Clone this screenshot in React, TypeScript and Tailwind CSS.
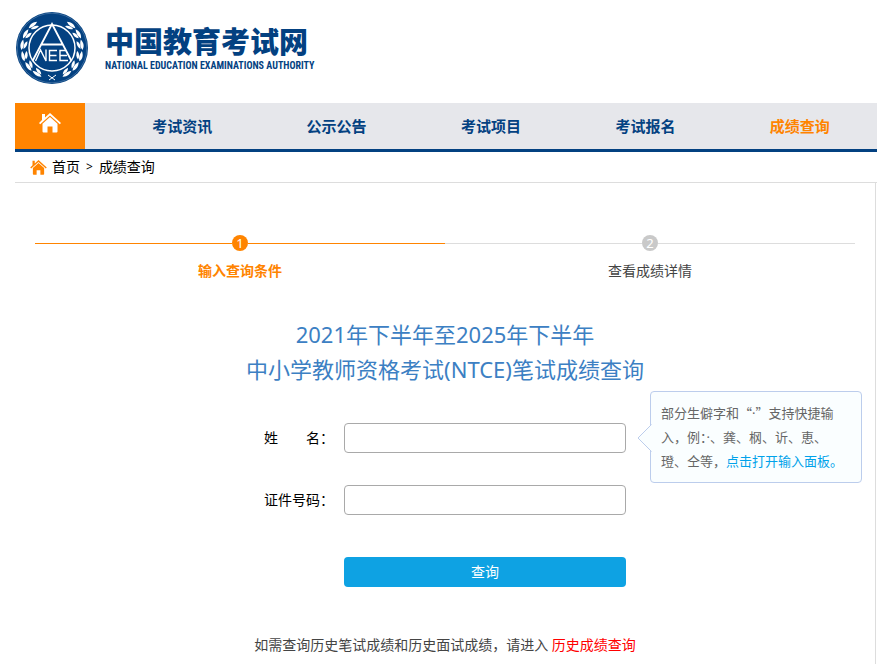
import React, { useState } from 'react';

const NAV_ITEMS = ['考试资讯', '公示公告', '考试项目', '考试报名', '成绩查询'];

const STEPS = ['输入查询条件', '查看成绩详情'];

// angles (from the bottom, in degrees) of the leaf pairs on one branch
const LEAVES = [22, 44, 66, 88, 110, 132];

const Branch: React.FC = () => (
  <g fill="#fff">
    {LEAVES.map((angle) => (
      <g key={angle} transform={`rotate(${angle} 36 36)`}>
        <path d="M37 66.5C34 64 31 63.5 26.5 64.5C29.5 67.5 33 68.5 37 66.5Z" />
        <path d="M36 64.5C34.5 61.5 32 60.3 28.5 60.3C29.5 63 32 64.8 36 64.5Z" />
      </g>
    ))}
  </g>
);

const Emblem: React.FC = () => (
  <svg width="74" height="74" viewBox="-1 -1 74 74" aria-hidden="true">
    <circle cx="36" cy="36" r="36" fill="#034181" />
    <circle cx="36" cy="36" r="34.8" fill="none" stroke="#6f93b8" strokeWidth="0.5" />
    <Branch />
    <g transform="translate(72 0) scale(-1 1)">
      <Branch />
    </g>
    <path d="M33 68L40 63M39 68L32 63" stroke="#fff" strokeWidth="1" />
    <circle cx="36" cy="36" r="23" fill="#034181" stroke="#fff" strokeWidth="1.5" />
    <path d="M16.5 49L36 12L55.5 49M25.5 32.5H46.5" fill="none" stroke="#fff" strokeWidth="1.8" />
    <path
      d="M19.5 49L24.5 38L30 49V37.5M41 38.5H33.5V48.5H41M33.5 43.5H40.5M52 48.5H44V38.5H49.5M44 43.5H51"
      fill="none"
      stroke="#fff"
      strokeWidth="1.4"
    />
  </svg>
);

const HomeIcon: React.FC<{ className: string }> = ({ className }) => (
  <svg className={className} viewBox="0 0 22 20" fill="currentColor" aria-hidden="true">
    <path d="M3 1h3v3.5L11 0l11 10-1.2 1.3L11 2.5 1.2 11.3 0 10l3-3z" />
    <path d="M11 4l7.5 6.8V18.5a1 1 0 0 1-1 1H13.5V13.5H8.5V19.5H4.5a1 1 0 0 1-1-1V10.8z" />
  </svg>
);

const Header: React.FC = () => (
  <header className="flex items-center gap-4 py-[11px] pl-[15px]">
    <Emblem />
    <div className="text-[#034181]">
      <div className="text-[29px] leading-[36px] font-black">中国教育考试网</div>
      <div className="font-['Roboto_Condensed',Roboto,sans-serif] text-[10px] leading-[12px] font-bold whitespace-nowrap">
        NATIONAL EDUCATION EXAMINATIONS AUTHORITY
      </div>
    </div>
  </header>
);

const Nav: React.FC = () => (
  <nav className="mt-[7px] ml-[15px] flex h-[49px] border-b-3 border-[#034181] bg-[#e6e7eb]">
    <a href="#" aria-label="首页" className="flex w-[70px] justify-center bg-[#ff8400] pt-[10px] text-white">
      <HomeIcon className="h-5 w-[22px]" />
    </a>
    <div className="flex flex-1 pl-5">
      {NAV_ITEMS.map((item) => (
        <a
          key={item}
          href="#"
          className={`flex-1 text-center text-[15px] leading-[46px] font-bold ${
            item === '成绩查询' ? 'text-[#ff8400]' : 'text-[#034181]'
          }`}
        >
          {item}
        </a>
      ))}
    </div>
  </nav>
);

const Steps: React.FC<{ current: number }> = ({ current }) => (
  <ol className="flex">
    {STEPS.map((step, index) => {
      const active = index === current;
      return (
        <li key={step} className="flex flex-1 flex-col items-center">
          <div className="flex w-full items-center">
            <span className={`h-px flex-1 ${active ? 'bg-[#ff8400]' : 'bg-[#dddddd]'}`} />
            <span
              className={`size-4 rounded-full text-center text-[13px] leading-4 text-white ${
                active ? 'bg-[#ff8400]' : 'bg-[#c9c9c9]'
              }`}
            >
              {index + 1}
            </span>
            <span className={`h-px flex-1 ${active ? 'bg-[#ff8400]' : 'bg-[#dddddd]'}`} />
          </div>
          <span className={`mt-[10px] text-sm ${active ? 'font-bold text-[#ff8400]' : 'text-[#444444]'}`}>
            {step}
          </span>
        </li>
      );
    })}
  </ol>
);

const InputTip: React.FC = () => (
  <div className="absolute top-[-32px] left-full ml-6 w-[212px] rounded border border-[#bccdec] bg-[#fafeff] py-[9px] pr-4 pl-[10px] text-[13px] leading-6 text-[#666666]">
    <svg className="absolute top-[32px] -left-[14px]" width="15" height="28" viewBox="0 0 15 28" aria-hidden="true">
      <path d="M14.5 0.5L1 14L14.5 27.5" fill="#fafeff" stroke="#bccdec" />
      <path d="M14.5 1.5V26.5" stroke="#fafeff" />
    </svg>
    部分生僻字和<span className="font-['Noto_Sans_CJK_SC',sans-serif]">“</span>·
    <span className="font-['Noto_Sans_CJK_SC',sans-serif]">”</span>支持快捷输入，例：·、龚、㭎、䜣、恵、璒、仝等，
    <a href="#" className="text-[#00a2ea]">
      点击打开输入面板。
    </a>
  </div>
);

const App: React.FC = () => {
  const [name, setName] = useState('');
  const [idNumber, setIdNumber] = useState('');

  const handleSubmit = (e: React.FormEvent) => {
    e.preventDefault();
  };

  const inputClass = 'h-[30px] w-[282px] rounded border border-[#a9a9a9] bg-white px-2 text-sm outline-none';

  return (
    <div
      lang="zh-CN"
      className="overflow-x-hidden bg-white font-['Noto_Sans','Noto_Sans_CJK_SC',sans-serif] text-sm text-black"
    >
      <Header />
      <Nav />
      <div className="ml-[15px] flex h-[31px] items-center border-b border-[#dddddd] pl-[15px]">
        <HomeIcon className="mr-[5px] h-[15px] w-[17px] text-[#ff8400]" />
        <a href="#">首页</a>
        <span className="mx-1.5 text-xs">&gt;</span>
        <span>成绩查询</span>
      </div>

      <main className="mr-px ml-[15px] border-r border-[#dddddd] px-5 pt-[52px] pb-[9px]">
        <Steps current={0} />

        <h1 className="mt-9 text-center text-[22px] leading-[35px] text-[#3c80c3]">
          2021年下半年至2025年下半年
          <br />
          中小学教师资格考试(NTCE)笔试成绩查询
        </h1>

        <form onSubmit={handleSubmit} className="mx-auto mt-9 w-[362px]">
          <div className="relative flex items-center">
            <label htmlFor="name" className="flex w-20">
              <span className="flex w-14 justify-between">
                <span>姓</span>
                <span>名</span>
              </span>
              ：
            </label>
            <input id="name" type="text" value={name} onChange={(e) => setName(e.target.value)} className={inputClass} />
            <InputTip />
          </div>
          <div className="mt-8 flex items-center">
            <label htmlFor="idNumber" className="w-20">
              证件号码：
            </label>
            <input
              id="idNumber"
              type="text"
              value={idNumber}
              onChange={(e) => setIdNumber(e.target.value)}
              className={inputClass}
            />
          </div>
          <button type="submit" className="mt-[42px] ml-20 h-[30px] w-[282px] rounded-sm bg-[#0ea2e3] text-white">
            查询
          </button>
        </form>

        <p className="mt-12 text-center text-[#444444]">
          如需查询历史笔试成绩和历史面试成绩，请进入{' '}
          <a href="#" className="text-[#ff0000]">
            历史成绩查询
          </a>
        </p>
      </main>
    </div>
  );
};

export default App;
